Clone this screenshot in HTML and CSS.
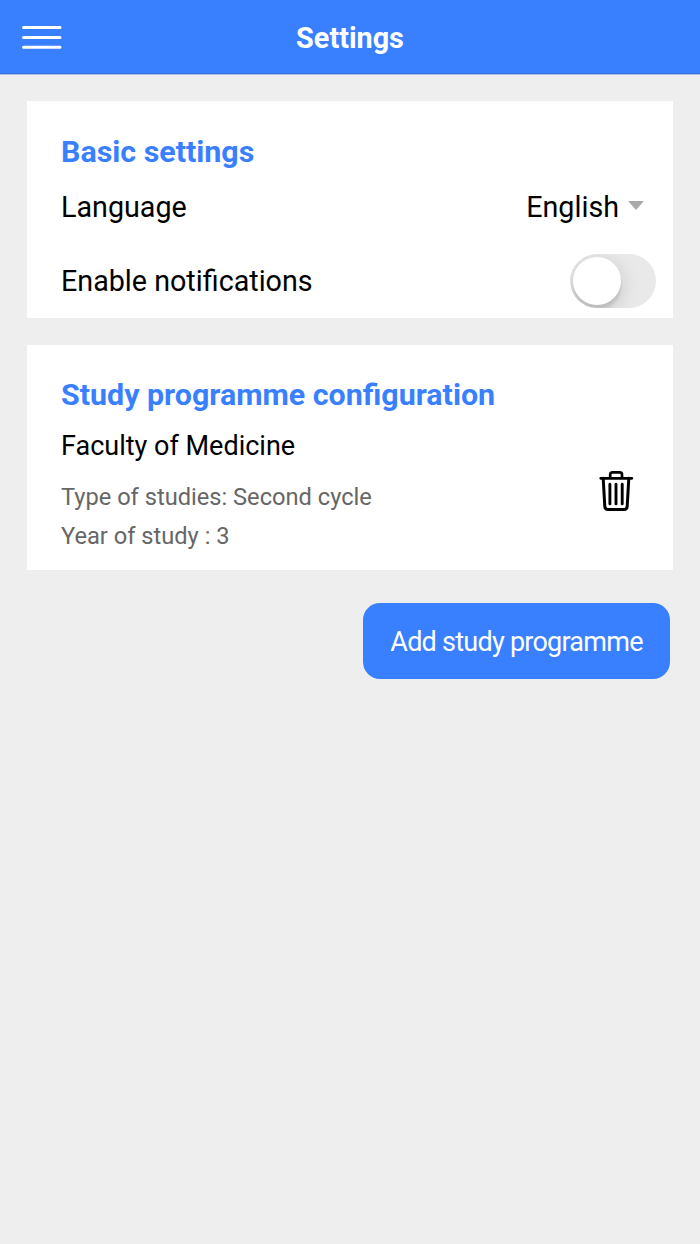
FILE: index.html
```html
<!DOCTYPE html>
<html lang="en">
<head>
<meta charset="utf-8">
<title>Settings</title>
<link rel="stylesheet" href="styles.css">
</head>
<body>
<header class="toolbar">
  <button class="menu" aria-label="Menu"><svg width="40" height="24" viewBox="0 0 40 24"><path d="M1.500 1.600h36.500M1.500 11.500h36.500M1.500 21.200h36.500" stroke="#fff" stroke-width="3" stroke-linecap="round"/></svg></button>
  <h1 class="title">Settings</h1>
</header>
<main class="content">
  <section class="card basic">
    <h2 class="heading">Basic settings</h2>
    <div class="row language"><span>Language</span><span class="select">English<i class="caret"></i></span></div>
    <div class="row notifications"><span>Enable notifications</span><span class="toggle"><i class="knob"></i></span></div>
  </section>
  <section class="card study">
    <h2 class="heading">Study programme configuration</h2>
    <div class="programme">
      <div class="details">
        <h3 class="faculty">Faculty of Medicine</h3>
        <p class="meta">Type of studies: Second cycle</p>
        <p class="meta">Year of study : 3</p>
      </div>
      <svg class="trash" width="35" height="42" viewBox="0 0 35 42" fill="none" stroke="#000" stroke-width="3" stroke-linecap="round" stroke-linejoin="round"><path d="M4.200 8.300l1.600 28Q6 39.500 9 39.500h16q3 0 3.200-3.200l1.600-28"/><path d="M1.700 8.300h31.200M11.200 8V4.500Q11.200 2.300 13.400 2.300h7.400Q23 2.300 23 4.500V8" stroke-width="2.700"/><path d="M17 14.200v19.700M10.900 14.200v19.700M23.200 14.200v19.700" stroke-width="2.900"/></svg>
    </div>
  </section>
  <button class="add">Add study programme</button>
</main>
</body>
</html>
```
FILE: styles.css
```css
* { box-sizing: border-box; }
body { margin: 0; min-height: 1244px; background: #eeeeee; color: #000; font-family: Roboto, sans-serif; }
h1, h2, h3, p { margin: 0; }
.toolbar { display: grid; grid-template-columns: 62px 1fr 62px; align-items: center; height: 75px; background: linear-gradient(#3880ff 73px, #3171e0 73px, #3171e0 74px, #a9c1ec 74px); }
.menu { display: flex; justify-content: flex-end; padding: 0; border: 0; background: none; }
.title { color: #fff; font-size: 28.8px; font-weight: 700; line-height: 34px; text-align: center; padding-top: 1px; }
.content { display: flex; flex-direction: column; padding: 26px 27px 0; }
.card { background: #fff; padding-left: 34px; margin-bottom: 27px; }
.basic { height: 217px; padding-top: 33px; }
.study { height: 225px; padding-top: 32px; }
.heading { color: #3880ff; font-size: 30.4px; font-weight: 700; line-height: 36px; }
.row { display: flex; justify-content: space-between; align-items: center; font-size: 28.7px; }
.language { height: 74px; padding-right: 29px; }
.notifications { height: 73px; padding-right: 17px; }
.select { display: flex; align-items: center; gap: 9px; }
.caret { border: 8px solid transparent; border-top: 9px solid #aaa; border-bottom: 0; margin-bottom: 3px; }
.toggle { width: 86px; height: 54px; padding: 3px; border-radius: 27px; background: #e9e9e9; overflow: hidden; }
.knob { display: block; width: 48px; height: 48px; border-radius: 50%; background: #fff; box-shadow: 0 5px 20px rgba(0,0,0,.16), 0 5px 3px rgba(0,0,0,.1); }
.programme { display: flex; justify-content: space-between; padding-right: 39px; }
.faculty { font-size: 27px; font-weight: 400; line-height: 32px; margin: 17px 0 16px; }
.meta { color: #666; font-size: 23.65px; line-height: 39px; }
.trash { margin-top: 57px; }
.add { align-self: flex-end; width: 307px; height: 76px; margin: 6px 3px 0 0; padding: 2px 0 0; border: 0; border-radius: 17px; background: #3880ff; color: #fff; font: 400 27px Roboto, sans-serif; letter-spacing: -.75px; }
```
